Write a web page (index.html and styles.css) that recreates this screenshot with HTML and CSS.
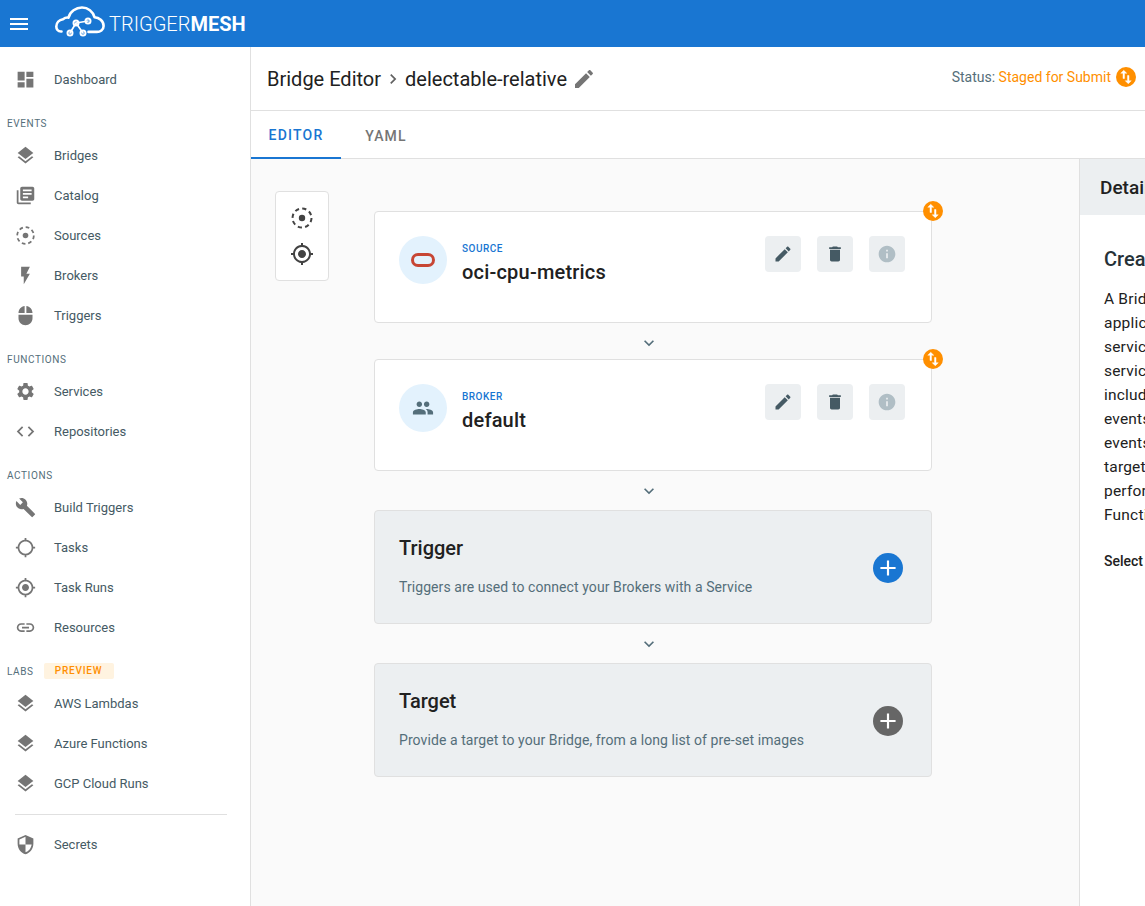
FILE: index.html
```html
<!DOCTYPE html>
<html lang="en">
<head>
  <meta charset="UTF-8">
  <meta name="viewport" content="width=device-width, initial-scale=1.0">
  <title>Bridge Editor</title>
  <link rel="stylesheet" href="styles.css">
</head>
<body>
  <svg class="sprite" aria-hidden="true">
    <symbol id="i-menu" viewBox="0 0 24 24"><path d="M3 18h18v-2H3v2zm0-5h18v-2H3v2zm0-7v2h18V6H3z"/></symbol>
    <symbol id="i-dashboard" viewBox="0 0 24 24"><path d="M3 13h8V3H3v10zm0 8h8v-6H3v6zm10 0h8V11h-8v10zm0-18v6h8V3h-8z"/></symbol>
    <symbol id="i-layers" viewBox="0 0 24 24"><path d="M11.99 18.54l-7.37-5.73L3 14.07l9 7 9-7-1.63-1.27-7.38 5.74zM12 16l7.36-5.73L21 9l-9-7-9 7 1.63 1.27L12 16z"/></symbol>
    <symbol id="i-catalog" viewBox="0 0 24 24"><path d="M4 6H2v14c0 1.1.9 2 2 2h14v-2H4V6zm16-4H8c-1.1 0-2 .9-2 2v12c0 1.1.9 2 2 2h12c1.1 0 2-.9 2-2V4c0-1.1-.9-2-2-2zm-1 9H9V9h10v2zm-4 4H9v-2h6v2zm4-8H9V5h10v2z"/></symbol>
    <symbol id="i-source" viewBox="0 0 24 24"><circle cx="12" cy="12" r="9.5" fill="none" stroke="currentColor" stroke-width="2" stroke-dasharray="4.2 3.25"/><circle cx="12" cy="12" r="3.2"/></symbol>
    <symbol id="i-flash" viewBox="0 0 24 24"><path d="M7 2v11h3v9l7-12h-4l4-8z"/></symbol>
    <symbol id="i-mouse" viewBox="0 0 24 24"><path d="M13 1.07V9h7c0-4.08-3.05-7.44-7-7.93zM4 15c0 4.42 3.58 8 8 8s8-3.58 8-8v-4H4v4zm7-13.93C7.05 1.56 4 4.92 4 9h7V1.07z"/></symbol>
    <symbol id="i-settings" viewBox="0 0 24 24"><path d="M19.14 12.94c.04-.3.06-.61.06-.94 0-.32-.02-.64-.07-.94l2.03-1.58c.18-.14.23-.41.12-.61l-1.92-3.32c-.12-.22-.37-.29-.59-.22l-2.39.96c-.5-.38-1.03-.7-1.62-.94l-.36-2.54c-.04-.24-.24-.41-.48-.41h-3.84c-.24 0-.43.17-.47.41l-.36 2.54c-.59.24-1.13.57-1.62.94l-2.39-.96c-.22-.08-.47 0-.59.22L2.74 8.87c-.12.21-.08.47.12.61l2.03 1.58c-.05.3-.09.63-.09.94s.02.64.07.94l-2.03 1.58c-.18.14-.23.41-.12.61l1.92 3.32c.12.22.37.29.59.22l2.39-.96c.5.38 1.03.7 1.62.94l.36 2.54c.05.24.24.41.48.41h3.84c.24 0 .44-.17.47-.41l.36-2.54c.59-.24 1.13-.56 1.62-.94l2.39.96c.22.08.47 0 .59-.22l1.92-3.32c.12-.22.07-.47-.12-.61l-2.01-1.58zM12 15.6c-1.98 0-3.6-1.62-3.6-3.6s1.62-3.6 3.6-3.6 3.6 1.62 3.6 3.6-1.62 3.6-3.6 3.6z"/></symbol>
    <symbol id="i-code" viewBox="0 0 24 24"><path d="M9.4 16.6L4.8 12l4.6-4.6L8 6l-6 6 6 6 1.4-1.4zm5.2 0l4.6-4.6-4.6-4.6L16 6l6 6-6 6-1.4-1.4z"/></symbol>
    <symbol id="i-build" viewBox="0 0 24 24"><path d="M22.7 19l-9.1-9.1c.9-2.3.4-5-1.5-6.9-2-2-5-2.4-7.4-1.3L9 6 6 9 1.6 4.7C.4 7.1.9 10.1 2.9 12.1c1.9 1.9 4.6 2.4 6.9 1.5l9.1 9.1c.4.4 1 .4 1.4 0l2.3-2.3c.5-.4.5-1.1.1-1.4z"/></symbol>
    <symbol id="i-gps" viewBox="0 0 24 24"><path d="M20.94 11c-.46-4.17-3.77-7.48-7.94-7.94V1h-2v2.06C6.83 3.52 3.52 6.83 3.06 11H1v2h2.06c.46 4.17 3.77 7.48 7.94 7.94V23h2v-2.06c4.17-.46 7.48-3.77 7.94-7.94H23v-2h-2.06zM12 19c-3.87 0-7-3.13-7-7s3.13-7 7-7 7 3.13 7 7-3.13 7-7 7z"/></symbol>
    <symbol id="i-gps-fixed" viewBox="0 0 24 24"><path d="M12 8c-2.21 0-4 1.79-4 4s1.79 4 4 4 4-1.79 4-4-1.79-4-4-4zm8.94 3c-.46-4.17-3.77-7.48-7.94-7.94V1h-2v2.06C6.83 3.52 3.52 6.83 3.06 11H1v2h2.06c.46 4.17 3.77 7.48 7.94 7.94V23h2v-2.06c4.17-.46 7.48-3.77 7.94-7.94H23v-2h-2.06zM12 19c-3.87 0-7-3.13-7-7s3.13-7 7-7 7 3.13 7 7-3.13 7-7 7z"/></symbol>
    <symbol id="i-link" viewBox="0 0 24 24"><path d="M3.9 12c0-1.71 1.39-3.1 3.1-3.1h4V7H7c-2.76 0-5 2.24-5 5s2.24 5 5 5h4v-1.9H7c-1.71 0-3.1-1.39-3.1-3.1zM8 13h8v-2H8v2zm9-6h-4v1.9h4c1.71 0 3.1 1.39 3.1 3.1s-1.39 3.1-3.1 3.1h-4V17h4c2.76 0 5-2.24 5-5s-2.24-5-5-5z"/></symbol>
    <symbol id="i-shield" viewBox="0 0 24 24"><path d="M12 1L3 5v6c0 5.55 3.84 10.74 9 12 5.16-1.26 9-6.45 9-12V5l-9-4zm0 10.99h7c-.53 4.12-3.28 7.79-7 8.94V12H5V6.3l7-3.11v8.8z"/></symbol>
    <symbol id="i-edit" viewBox="0 0 24 24"><path d="M3 17.25V21h3.75L17.81 9.94l-3.75-3.75L3 17.25zM20.71 7.04c.39-.39.39-1.02 0-1.41l-2.34-2.34c-.39-.39-1.02-.39-1.41 0l-1.83 1.83 3.75 3.75 1.83-1.83z"/></symbol>
    <symbol id="i-delete" viewBox="0 0 24 24"><path d="M6 19c0 1.1.9 2 2 2h8c1.1 0 2-.9 2-2V7H6v12zM19 4h-3.5l-1-1h-5l-1 1H5v2h14V4z"/></symbol>
    <symbol id="i-info" viewBox="0 0 24 24"><path d="M12 2C6.48 2 2 6.48 2 12s4.48 10 10 10 10-4.48 10-10S17.52 2 12 2zm1 15h-2v-6h2v6zm0-8h-2V7h2v2z"/></symbol>
    <symbol id="i-people" viewBox="0 0 24 24"><path d="M16 11c1.66 0 2.99-1.34 2.99-3S17.66 5 16 5c-1.66 0-3 1.34-3 3s1.34 3 3 3zm-8 0c1.66 0 2.99-1.34 2.99-3S9.66 5 8 5C6.34 5 5 6.34 5 8s1.34 3 3 3zm0 2c-2.33 0-7 1.17-7 3.5V19h14v-2.5c0-2.33-4.67-3.5-7-3.5zm8 0c-.29 0-.62.02-.97.05 1.16.84 1.97 1.97 1.97 3.45V19h6v-2.5c0-2.33-4.67-3.5-7-3.5z"/></symbol>
    <symbol id="i-swap" viewBox="0 0 24 24"><path d="M16 17.01V10h-2v7.01h-3L15 21l4-3.99h-3zM9 3L5 6.99h3V14h2V6.99h3L9 3z"/></symbol>
    <symbol id="i-add" viewBox="0 0 24 24"><path d="M19 13h-6v6h-2v-6H5v-2h6V5h2v6h6v2z"/></symbol>
    <symbol id="i-down" viewBox="0 0 24 24"><path d="M16.59 8.59L12 13.17 7.41 8.59 6 10l6 6 6-6z"/></symbol>
    <symbol id="i-right" viewBox="0 0 24 24"><path d="M10 6L8.59 7.41 13.17 12l-4.58 4.59L10 18l6-6z"/></symbol>
  </svg>

  <header class="topbar">
    <svg class="menu-icon"><use href="#i-menu"/></svg>
    <svg class="logo" viewBox="0 0 50 32" stroke="#fff" stroke-width="2.6" stroke-linecap="round" stroke-linejoin="round">
      <path d="M6.500 25.500H6C2.800 25.500 1.300 23 1.300 20.500 1.300 16.500 4.300 13.800 8 13.200 9.500 12 11.500 11.300 13.500 11.600 15 5.500 21 1.500 27 1.500 33 1.500 38 5.500 39.500 11.200 44 11.500 48.600 15 48.600 20 48.600 24 45 25.900 42 25.900H33.500"/>
      <path d="M15 27L21 17 28 27M21 17L33 15" stroke-width="1.700"/>
      <circle cx="15" cy="27" r="2.500" stroke-width="2"/>
      <circle cx="21" cy="17" r="2.500" stroke-width="2"/>
      <circle cx="28" cy="27" r="2.500" stroke-width="2"/>
      <circle cx="33" cy="15" r="2.500" stroke-width="2"/>
    </svg>
    <span class="brand">TRIGGER<b>MESH</b></span>
  </header>

  <div class="layout">
    <nav class="sidebar">
      <a class="nav-item"><svg><use href="#i-dashboard"/></svg>Dashboard</a>

      <div class="nav-label">Events</div>
      <a class="nav-item"><svg><use href="#i-layers"/></svg>Bridges</a>
      <a class="nav-item"><svg><use href="#i-catalog"/></svg>Catalog</a>
      <a class="nav-item"><svg><use href="#i-source"/></svg>Sources</a>
      <a class="nav-item"><svg><use href="#i-flash"/></svg>Brokers</a>
      <a class="nav-item"><svg><use href="#i-mouse"/></svg>Triggers</a>

      <div class="nav-label">Functions</div>
      <a class="nav-item"><svg><use href="#i-settings"/></svg>Services</a>
      <a class="nav-item"><svg><use href="#i-code"/></svg>Repositories</a>

      <div class="nav-label">Actions</div>
      <a class="nav-item"><svg><use href="#i-build"/></svg>Build Triggers</a>
      <a class="nav-item"><svg><use href="#i-gps"/></svg>Tasks</a>
      <a class="nav-item"><svg><use href="#i-gps-fixed"/></svg>Task Runs</a>
      <a class="nav-item"><svg><use href="#i-link"/></svg>Resources</a>

      <div class="nav-label">Labs <span class="preview">Preview</span></div>
      <a class="nav-item"><svg><use href="#i-layers"/></svg>AWS Lambdas</a>
      <a class="nav-item"><svg><use href="#i-layers"/></svg>Azure Functions</a>
      <a class="nav-item"><svg><use href="#i-layers"/></svg>GCP Cloud Runs</a>

      <hr class="nav-divider">
      <a class="nav-item"><svg><use href="#i-shield"/></svg>Secrets</a>
    </nav>

    <main class="main">
      <div class="page-head">
        <h1 class="crumbs">
          Bridge Editor
          <svg class="crumb-sep"><use href="#i-right"/></svg>
          delectable-relative
          <svg class="crumb-edit"><use href="#i-edit"/></svg>
        </h1>
        <div class="status">
          Status:&nbsp;<span class="status-text">Staged for Submit</span>
          <span class="swap-badge status-badge"><svg><use href="#i-swap"/></svg></span>
        </div>
      </div>

      <div class="tabs">
        <a class="tab active">EDITOR</a>
        <a class="tab">YAML</a>
      </div>

      <div class="workspace">
        <section class="canvas">
          <div class="toolbox">
            <svg><use href="#i-source"/></svg>
            <svg><use href="#i-gps-fixed"/></svg>
          </div>

          <div class="flow">
            <div class="card">
              <span class="swap-badge card-badge"><svg><use href="#i-swap"/></svg></span>
              <div class="card-icon">
                <svg class="oracle" viewBox="0 0 24 14"><rect x="1.500" y="1.500" width="21" height="11" rx="5.500"/></svg>
              </div>
              <div class="card-text">
                <div class="card-kind">SOURCE</div>
                <div class="card-name">oci-cpu-metrics</div>
              </div>
              <div class="card-actions">
                <button class="action"><svg><use href="#i-edit"/></svg></button>
                <button class="action"><svg><use href="#i-delete"/></svg></button>
                <button class="action muted"><svg><use href="#i-info"/></svg></button>
              </div>
            </div>

            <div class="connector"><svg><use href="#i-down"/></svg></div>

            <div class="card">
              <span class="swap-badge card-badge"><svg><use href="#i-swap"/></svg></span>
              <div class="card-icon">
                <svg class="people"><use href="#i-people"/></svg>
              </div>
              <div class="card-text">
                <div class="card-kind">BROKER</div>
                <div class="card-name">default</div>
              </div>
              <div class="card-actions">
                <button class="action"><svg><use href="#i-edit"/></svg></button>
                <button class="action"><svg><use href="#i-delete"/></svg></button>
                <button class="action muted"><svg><use href="#i-info"/></svg></button>
              </div>
            </div>

            <div class="connector wide"><svg><use href="#i-down"/></svg></div>

            <div class="card empty">
              <div>
                <h3>Trigger</h3>
                <p>Triggers are used to connect your Brokers with a Service</p>
              </div>
              <button class="add blue"><svg><use href="#i-add"/></svg></button>
            </div>

            <div class="connector wide"><svg><use href="#i-down"/></svg></div>

            <div class="card empty">
              <div>
                <h3>Target</h3>
                <p>Provide a target to your Bridge, from a long list of pre-set images</p>
              </div>
              <button class="add grey"><svg><use href="#i-add"/></svg></button>
            </div>
          </div>
        </section>

        <aside class="details">
          <div class="details-head">Details</div>
          <div class="details-body">
            <h2>Create a Bridge</h2>
            <p>A Bridge is an<br>application of<br>services and<br>services that<br>include a flow of<br>events, where<br>events reach a<br>target to<br>perform a<br>Function.</p>
            <div class="details-hint">Select a block</div>
          </div>
        </aside>
      </div>
    </main>
  </div>
</body>
</html>
```

FILE: styles.css
```css
* {
  box-sizing: border-box;
}

html, body {
  height: 100%;
}

body {
  margin: 0;
  font-family: 'Roboto', sans-serif;
  color: #212121;
  background-color: #fff;
  display: flex;
  flex-direction: column;
  overflow: hidden;
}

svg {
  fill: currentColor;
}

.sprite {
  display: none;
}

/* top bar */
.topbar {
  height: 47px;
  flex-shrink: 0;
  background-color: #1976d2;
  color: #fff;
  display: flex;
  align-items: center;
  padding-left: 7px;
}

.menu-icon {
  width: 24px;
  height: 24px;
}

.logo {
  width: 50px;
  height: 32px;
  margin-left: 24px;
  margin-top: -3px;
  fill: none;
}

.brand {
  margin-left: 4px;
  font-size: 20px;
  font-weight: 300;
}

.brand b {
  font-weight: 700;
}

.layout {
  flex: 1;
  display: flex;
  min-height: 0;
}

/* sidebar */
.sidebar {
  width: 251px;
  flex-shrink: 0;
  border-right: 1px solid #e0e0e0;
  padding-top: 12px;
}

.nav-item {
  height: 40px;
  display: flex;
  align-items: center;
  padding-left: 14.5px;
  font-size: 13px;
  color: #455a64;
}

.nav-item svg {
  width: 21px;
  height: 21px;
  margin-right: 18.5px;
  color: #757575;
}

.nav-label {
  height: 24px;
  margin-top: 12px;
  padding-left: 7px;
  display: flex;
  align-items: center;
  font-size: 10px;
  letter-spacing: 0.6px;
  text-transform: uppercase;
  color: #546e7a;
}

.preview {
  margin-left: 10px;
  width: 70px;
  height: 16px;
  line-height: 16px;
  text-align: center;
  background-color: #fff3e0;
  color: #ff8f00;
  border-radius: 2px;
  font-weight: 500;
  letter-spacing: 0.8px;
}

.nav-divider {
  margin: 11px 23px 0 15px;
  height: 1px;
  border: none;
  background-color: #e0e0e0;
}

.nav-divider + .nav-item {
  margin-top: 9px;
}

/* main */
.main {
  flex: 1;
  min-width: 0;
  display: flex;
  flex-direction: column;
}

.page-head {
  height: 64px;
  flex-shrink: 0;
  border-bottom: 1px solid #e0e0e0;
  display: flex;
  align-items: center;
  justify-content: space-between;
  padding: 0 9px 0 16px;
}

.crumbs {
  margin: 0;
  display: flex;
  align-items: center;
  font-size: 20px;
  font-weight: 400;
  color: #212121;
}

.crumb-sep {
  width: 20px;
  height: 20px;
  margin: 0 2px;
  color: #616161;
}

.crumb-edit {
  width: 24px;
  height: 24px;
  margin-left: 5px;
  color: #757575;
}

.status {
  display: flex;
  align-items: center;
  font-size: 14px;
  color: #546e7a;
  margin-top: -3px;
}

.status-text {
  color: #ff8f00;
}

.swap-badge {
  width: 20px;
  height: 20px;
  border-radius: 50%;
  background-color: #ff8f00;
  color: #fff;
  display: flex;
  align-items: center;
  justify-content: center;
}

.swap-badge svg {
  width: 18px;
  height: 18px;
  stroke: currentColor;
  stroke-width: 0.6;
}

.status-badge {
  margin-left: 5px;
}

.tabs {
  height: 48px;
  flex-shrink: 0;
  border-bottom: 1px solid #e0e0e0;
  display: flex;
}

.tab {
  width: 90px;
  height: 48px;
  padding-top: 2px;
  display: flex;
  align-items: center;
  justify-content: center;
  font-size: 14px;
  font-weight: 500;
  letter-spacing: 1.2px;
  color: #757575;
}

.tab.active {
  color: #1976d2;
  border-bottom: 2px solid #1976d2;
}

/* workspace */
.workspace {
  flex: 1;
  display: flex;
  min-height: 0;
  overflow: hidden;
}

.canvas {
  width: 828px;
  flex-shrink: 0;
  background-color: #fafafa;
  display: flex;
  align-items: flex-start;
  padding: 32px 0 0 24px;
}

.toolbox {
  width: 54px;
  height: 90px;
  flex-shrink: 0;
  background-color: #fff;
  border: 1px solid #e0e0e0;
  border-radius: 4px;
  display: flex;
  flex-direction: column;
  align-items: center;
  justify-content: center;
  gap: 12px;
  color: #424242;
}

.toolbox svg {
  width: 24px;
  height: 24px;
}

.flow {
  width: 558px;
  margin: 20px 0 0 45px;
}

.card {
  position: relative;
  height: 112px;
  background-color: #fff;
  border: 1px solid #e0e0e0;
  border-radius: 4px;
  padding: 24px 26px 0 24px;
  display: flex;
  align-items: flex-start;
}

.card-badge {
  position: absolute;
  top: -11px;
  right: -12px;
}

.card-icon {
  width: 48px;
  height: 48px;
  flex-shrink: 0;
  border-radius: 50%;
  background-color: #e3f2fd;
  display: flex;
  align-items: center;
  justify-content: center;
}

.oracle {
  width: 24px;
  height: 14px;
  fill: none;
  stroke: #c74634;
  stroke-width: 3;
}

.people {
  width: 22px;
  height: 22px;
  color: #546e7a;
}

.card-text {
  flex: 1;
  margin-left: 15px;
}

.card-kind {
  margin-top: 7px;
  font-size: 10px;
  font-weight: 500;
  letter-spacing: 0.5px;
  color: #1976d2;
  line-height: 12px;
}

.card-name {
  margin-top: 4px;
  font-size: 20px;
  font-weight: 500;
  letter-spacing: 0.2px;
  line-height: 26px;
  color: #212121;
}

.card-actions {
  display: flex;
  gap: 16px;
}

.action {
  width: 36px;
  height: 36px;
  padding: 0;
  border: none;
  border-radius: 4px;
  background-color: #eceff1;
  color: #455a64;
  display: flex;
  align-items: center;
  justify-content: center;
}

.action svg {
  width: 20px;
  height: 20px;
}

.action.muted {
  color: #b0bec5;
}

.connector {
  height: 36px;
  padding: 3px 8px 0 0;
  display: flex;
  align-items: center;
  justify-content: center;
  color: #546e7a;
}

.connector.wide {
  height: 39px;
  padding-top: 0;
}

.connector svg {
  width: 20px;
  height: 20px;
}

.card.empty {
  height: 114px;
  background-color: #eceff1;
  padding: 0 28px 3px 24px;
  align-items: center;
  justify-content: space-between;
}

.card.empty h3 {
  margin: 0 0 16px;
  font-size: 20px;
  font-weight: 500;
  line-height: 26px;
  color: #212121;
}

.card.empty p {
  margin: 0;
  font-size: 14px;
  letter-spacing: 0.08px;
  line-height: 20px;
  color: #546e7a;
}

.add {
  width: 30px;
  height: 30px;
  margin-top: 5px;
  padding: 0;
  border: none;
  border-radius: 50%;
  color: #fff;
  display: flex;
  align-items: center;
  justify-content: center;
}

.add svg {
  width: 26px;
  height: 26px;
}

.add.blue {
  background-color: #1976d2;
}

.add.grey {
  background-color: #666;
}

/* details panel, runs off the right edge */
.details {
  width: 320px;
  flex-shrink: 0;
  border-left: 1px solid #e0e0e0;
  background-color: #fff;
}

.details-head {
  height: 56px;
  padding-left: 20px;
  display: flex;
  align-items: center;
  background-color: #eceff1;
  font-size: 19px;
  font-weight: 500;
  color: #212121;
}

.details-body {
  padding: 31px 24px 0;
}

.details-body h2 {
  margin: 0 0 15px;
  font-size: 20px;
  font-weight: 500;
  line-height: 26px;
  color: #263238;
}

.details-body p {
  margin: 0 0 22px;
  font-size: 15.5px;
  letter-spacing: 0.2px;
  line-height: 24px;
  color: #212121;
}

.details-hint {
  font-size: 14px;
  font-weight: 500;
  line-height: 24px;
  color: #212121;
}
```
